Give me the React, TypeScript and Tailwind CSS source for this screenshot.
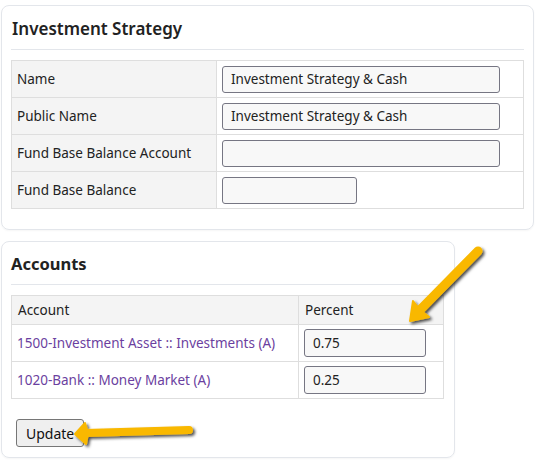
import React from "react";

const font = { fontFamily: '"Noto Sans", "Open Sans", sans-serif' };

function FieldRow({ label, width, value, first }: { label: string; width: number; value?: string; first?: boolean }) {
  return (
    <div className={`flex ${first ? "h-[36px]" : "h-[37px] border-t border-[#dedede]"}`}>
      <div className="w-[204px] bg-[#f4f4f4] flex items-center pl-[5px] text-[13.5px] text-[#222]">{label}</div>
      <div className="flex-1 border-l border-[#dedede] flex items-center pl-[5px]">
        <input
          readOnly
          value={value ?? ""}
          style={{ width }}
          className="h-[27px] bg-[#f8f8f8] border border-[#767683] rounded-[3px] pl-[8px] text-[13.5px] text-[#222] outline-none"
        />
      </div>
    </div>
  );
}

function AccountRow({ name, value }: { name: string; value: string }) {
  return (
    <div className="flex h-[37px] border-t border-[#dedede]">
      <div className="w-[286px] flex items-center pl-[5px] text-[13.5px] text-[#6b3fa0]">{name}</div>
      <div className="flex-1 border-l border-[#dedede] flex items-center pl-[5px]">
        <input
          readOnly
          value={value}
          className="w-[122px] h-[28px] bg-[#f8f8f8] border border-[#767683] rounded-[3px] pl-[8px] text-[13.5px] text-[#222] outline-none"
        />
      </div>
    </div>
  );
}

export default function App() {
  return (
    <div className="relative w-[538px] h-[461px] bg-white overflow-hidden" style={font}>
      <div className="pt-[5px] pl-[1px] flex flex-col">
        <div className="w-[533px] border border-[#e3e6eb] rounded-[8px] px-[9px] pt-[10px] pb-[20px] shadow-[0_1px_2px_rgba(0,0,0,0.04)]">
          <div className="text-[17px] leading-[26px] font-semibold text-[#222] pl-[1px]">Investment Strategy</div>
          <div className="mt-[7px] border-t border-[#e3e6eb]" />
          <div className="mt-[10px] border border-[#dedede]">
            <FieldRow first label="Name" width={278} value="Investment Strategy & Cash" />
            <FieldRow label="Public Name" width={278} value="Investment Strategy & Cash" />
            <FieldRow label="Fund Base Balance Account" width={278} />
            <FieldRow label="Fund Base Balance" width={135} />
          </div>
        </div>
        <div className="mt-[11px] w-[454px] border border-[#e3e6eb] rounded-[8px] px-[9px] pt-[10px] pb-[10px] shadow-[0_1px_2px_rgba(0,0,0,0.04)]">
          <div className="text-[16.5px] leading-[24px] font-bold text-[#222]">Accounts</div>
          <div className="mt-[8px] border-t border-[#e3e6eb]" />
          <div className="mt-[10px] w-[433px] border border-[#dedede]">
            <div className="flex h-[28px] bg-[#f4f4f4]">
              <div className="w-[286px] flex items-center pl-[6px] text-[13.5px] text-[#222]">Account</div>
              <div className="flex-1 border-l border-[#dedede] flex items-center pl-[6px] text-[13.5px] text-[#222]">Percent</div>
            </div>
            <AccountRow name="1500-Investment Asset :: Investments (A)" value="0.75" />
            <AccountRow name="1020-Bank :: Money Market (A)" value="0.25" />
          </div>
          <div className="mt-[20px] pl-[5px]">
            <button className="h-[28px] px-[9px] bg-[#efefef] border border-[#767676] rounded-[3px] text-[14px] text-[#111]">
              Update
            </button>
          </div>
        </div>
      </div>

      <svg className="absolute inset-0 pointer-events-none" width="538" height="461" viewBox="0 0 538 461">
        <defs>
          <filter id="sh" x="-20%" y="-20%" width="140%" height="140%">
            <feDropShadow dx="2" dy="2" stdDeviation="1.5" floodColor="#000" floodOpacity="0.7" />
          </filter>
        </defs>
        <g filter="url(#sh)" fill="#f9b800" stroke="#f9b800" strokeLinecap="round" strokeLinejoin="round">
          <line x1="478" y1="251" x2="418" y2="312" strokeWidth="9" />
          <polygon points="410,321 413,301 420,310 429,317" strokeWidth="2" />
          <line x1="189" y1="430" x2="86" y2="433" strokeWidth="8" />
          <polygon points="75,434 85,423 88,433 86,444" strokeWidth="2" />
        </g>
      </svg>
    </div>
  );
}
